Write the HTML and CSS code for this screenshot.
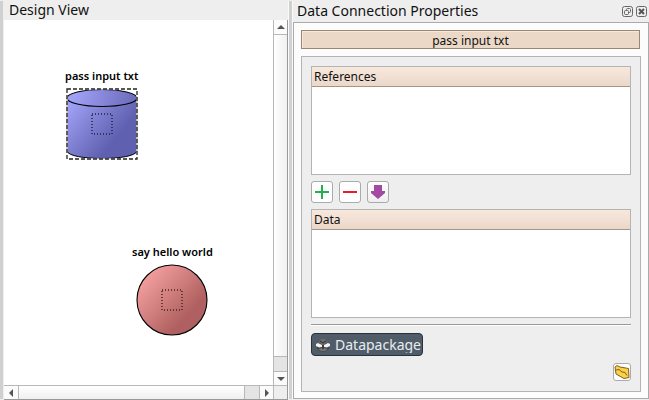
FILE: index.html
```html
<!DOCTYPE html>
<html lang="en">
<head>
<meta charset="utf-8">
<title>Design View</title>
<link rel="stylesheet" href="styles.css">
</head>
<body>
<div class="app">
  <div class="splitter"></div>
  <section class="design">
    <h2 class="title">Design View</h2>
    <div class="view">
      <div class="canvas">
        <div class="node node-data">
          <span class="node-label">pass input txt</span>
          <svg width="72" height="72" viewBox="0 0 72 72">
            <defs>
              <linearGradient id="blue" gradientUnits="userSpaceOnUse" x1="8" y1="12" x2="52" y2="48">
                <stop offset="0" stop-color="#a0a0f5"/><stop offset="1" stop-color="#6060b0"/>
              </linearGradient>
              <linearGradient id="lid" gradientUnits="userSpaceOnUse" x1="8" y1="8" x2="80" y2="24">
                <stop offset="0" stop-color="#a0a0f5"/><stop offset="1" stop-color="#6060b0"/>
              </linearGradient>
            </defs>
            <path d="M1 10V63C3 73 69 73 71 63V10" fill="url(#blue)" stroke="#000"/>
            <ellipse cx="36" cy="10" rx="35" ry="8.5" fill="url(#lid)" stroke="#000" stroke-width="1.2"/>
            <rect x="1" y="1" width="70" height="70" fill="none" stroke="#fff" stroke-width="1.300"/>
            <rect x="1" y="1" width="70" height="70" fill="none" stroke="#222" stroke-width="1.300" stroke-dasharray="4 2"/>
            <rect x="26" y="26" width="20" height="20" fill="none" stroke="#222244" stroke-width="1.500" stroke-dasharray="1 2"/>
          </svg>
        </div>
        <div class="node node-task">
          <span class="node-label">say hello world</span>
          <svg width="72" height="72" viewBox="0 0 72 72">
            <defs>
              <linearGradient id="red" x1="0.1" y1="0.15" x2="0.72" y2="0.72">
                <stop offset="0" stop-color="#f5a0a0"/><stop offset="1" stop-color="#b06060"/>
              </linearGradient>
            </defs>
            <circle cx="36" cy="36" r="35" fill="url(#red)" stroke="#000" stroke-width="1.1"/>
            <rect x="26" y="26" width="20" height="20" fill="none" stroke="#442222" stroke-width="1.500" stroke-dasharray="1 2"/>
          </svg>
        </div>
      </div>
      <div class="vbar">
        <button class="step" aria-label="Scroll up"><svg width="8" height="4" viewBox="0 0 8 4"><path d="M0 4L4 0L8 4Z" fill="#555"/></svg></button>
        <div class="thumb"></div>
        <div class="groove"></div>
        <button class="step last" aria-label="Scroll down"><svg width="8" height="4" viewBox="0 0 8 4"><path d="M0 0L4 4L8 0Z" fill="#555"/></svg></button>
      </div>
      <div class="hbar">
        <button class="step" aria-label="Scroll left"><svg width="4" height="8" viewBox="0 0 4 8"><path d="M4 0L0 4L4 8Z" fill="#555"/></svg></button>
        <div class="thumb"></div>
        <div class="groove"></div>
        <button class="step last" aria-label="Scroll right"><svg width="4" height="8" viewBox="0 0 4 8"><path d="M0 0L4 4L0 8Z" fill="#555"/></svg></button>
      </div>
      <div class="corner"></div>
    </div>
  </section>
  <div class="splitter mid"></div>
  <section class="props">
    <header class="props-head">
      <h2 class="title">Data Connection Properties</h2>
      <button class="dock" aria-label="Float"><svg width="11" height="11" viewBox="0 0 11 11" fill="none" stroke="#666"><rect x=".5" y=".5" width="10" height="10" rx="2"/><rect x="4.500" y="2.500" width="4" height="4" rx="1"/><rect x="2.500" y="4.500" width="4" height="4" rx="1" fill="#eee"/></svg></button>
      <button class="dock" aria-label="Close"><svg width="11" height="11" viewBox="0 0 11 11" fill="none" stroke="#666"><rect x=".5" y=".5" width="10" height="10" rx="2"/><path d="M3 3L8 8M8 3L3 8" stroke="#555" stroke-width="2"/></svg></button>
    </header>
    <div class="frame">
      <div class="name">pass input txt</div>
      <div class="group">
        <div class="list"><h3 class="list-head">References</h3></div>
        <div class="tools">
          <button class="tool" aria-label="Add"><svg width="20" height="20" viewBox="0 0 20 20"><path d="M3 10H17M10 3V17" stroke="#22b14c" stroke-width="2"/></svg></button>
          <button class="tool" aria-label="Remove"><svg width="20" height="20" viewBox="0 0 20 20"><path d="M3 10H17" stroke="#ed1c24" stroke-width="2"/></svg></button>
          <button class="tool shaded" aria-label="Move down"><svg width="20" height="20" viewBox="0 0 20 20"><path d="M6 3H14V9H17V11L10 17L3 11V9H6Z" fill="#a349a4"/></svg></button>
        </div>
        <div class="list"><h3 class="list-head">Data</h3></div>
        <hr class="rule">
        <button class="package"><svg width="14" height="14" viewBox="0 0 14 14"><ellipse cx="7" cy="9" rx="6" ry="4.500" fill="#3a3a3a"/><path d="M3 4L5 1H9L11 4L8 7H6Z" fill="#6c6c6c"/><path d="M4 3L7 5L10 3" fill="none" stroke="#2c2c2c"/><path d="M0 6L2 5L6 7L6 9L3 9.500L0 8Z" fill="#f2f2f2"/><path d="M14 6L12 5L8 7L8 9L11 9.500L14 8Z" fill="#f2f2f2"/><path d="M2 11L6 10L7 12L8 10L12 11L9 13H5Z" fill="#777"/></svg><span class="package-text">Datapackage</span></button>
        <button class="folder" aria-label="Open folder"><svg width="16" height="16" viewBox="0 0 16 16"><path d="M1 3L3 1.500L6 3L14.500 4.500L15 13.500L10 14.500L2 10Z" fill="#fbd04b" stroke="#80601c"/><path d="M2 6L5 5.500L8 8L11 8.500L13 11.500" fill="none" stroke="#80601c"/></svg></button>
      </div>
    </div>
  </section>
</div>
</body>
</html>
```
FILE: styles.css
```css
* { box-sizing: border-box; }

body {
  margin: 0;
  background: #eee;
  color: #111;
  font-family: "Noto Sans", sans-serif;
}

h2, h3 { margin: 0; font-weight: 400; }

button { margin: 0; padding: 0; border: 0; background: none; font: inherit; }

svg { display: block; }

.app {
  display: grid;
  grid-template-columns: 4px minmax(0, 284fr) 5px minmax(0, 356fr);
  height: 100vh;
}

.splitter {
  margin: 1px 1px 1px 0;
  background: #d0d0d0;
}

.splitter.mid {
  border: 1px solid #fafafa;
  border-width: 0 1px;
  margin: 1px 0;
}

.title {
  font-size: 14px;
  line-height: 20px;
  white-space: nowrap;
}

.design { display: flex; flex-direction: column; min-width: 0; }

.design .title { padding-left: 5px; }

.view {
  flex: 1;
  display: grid;
  grid-template-columns: 1fr 14px;
  grid-template-rows: 1fr 14px;
  border-right: 1px solid #999;
  border-bottom: 1px solid #999;
  min-height: 0;
}

.canvas { position: relative; background: #fff; overflow: hidden; }

.node {
  position: absolute;
  display: flex;
  flex-direction: column;
  align-items: center;
  gap: 4px;
}

.node-data { left: 61px; top: 48px; }
.node-task { left: 128px; top: 224px; }

.node-label {
  font-size: 11px;
  line-height: 16px;
  font-weight: 600;
  color: #000;
  white-space: nowrap;
}

.vbar, .hbar { display: flex; background: #e4e4e4; }
.vbar { flex-direction: column; border-left: 1px solid #b8b8b8; }
.hbar { border-top: 1px solid #b8b8b8; }

.step {
  flex: 0 0 14px;
  display: flex;
  align-items: center;
  justify-content: center;
  background: #fbfbfb;
}

.thumb { flex: 1; }
.groove { flex: 0 0 14px; }

.vbar .thumb {
  border: 1px solid #b8b8b8;
  border-width: 1px 0;
  background: linear-gradient(90deg, #fff, #f0f0f0);
}

.hbar .thumb {
  border: 1px solid #b8b8b8;
  border-width: 0 1px;
  background: linear-gradient(#fff, #f0f0f0);
}

.vbar .last { border-top: 1px solid #b8b8b8; }
.hbar .last { border-left: 1px solid #b8b8b8; }

.corner {
  border: 1px solid #b8b8b8;
  border-width: 1px 0 0 1px;
  background: #eee;
}

.props {
  display: flex;
  flex-direction: column;
  min-width: 0;
  padding-bottom: 1px;
}

.props-head {
  display: flex;
  align-items: center;
  gap: 3px;
  height: 22px;
  padding: 0 2px 0 4px;
}

.props-head .title { flex: 1; }

.frame {
  flex: 1;
  display: flex;
  flex-direction: column;
  gap: 7px;
  padding: 7px 7px 6px;
  border: 1px solid #aaa;
  background: #fcfcfc;
}

.name {
  margin-right: 1px;
  border: 1px solid #9b8674;
  background: #ebd8c7;
  box-shadow: inset 1px 1px #f8e8dc;
  font-size: 12px;
  line-height: 17px;
  padding-top: 1px;
  height: 19px;
  text-align: center;
}

.group {
  flex: 1;
  display: flex;
  flex-direction: column;
  gap: 6px;
  padding: 9px 9px 10px;
  border: 1px solid #b4b4b4;
  background: #eee;
}

.list {
  flex: 1;
  border: 1px solid #b4b4b4;
  background: #fff;
}

.list-head {
  padding-left: 2px;
  border-bottom: 1px solid #a89482;
  background: linear-gradient(#f8e8dc, #ead8ca);
  font-size: 12px;
  line-height: 19px;
}

.tools { display: flex; gap: 6px; }

.tool, .folder {
  border: 1px solid #aaa;
  border-radius: 3px;
  background: #fff;
}

.shaded { background: linear-gradient(#fff, #eee); }

.rule {
  width: 100%;
  height: 2px;
  margin: 0;
  border: 0;
  border-top: 1px solid #999;
  background: #fff;
}

.package {
  align-self: flex-start;
  display: flex;
  align-items: center;
  gap: 5px;
  height: 23px;
  margin: 1px 0;
  padding: 0 1px 0 4px;
  border: 1px solid #26333d;
  border-radius: 4px;
  background: #505d69;
  color: #e8ecef;
}

.package-text {
  height: 16px;
  overflow: hidden;
  font-size: 14px;
  line-height: 16px;
}

.folder { align-self: flex-end; }
```
